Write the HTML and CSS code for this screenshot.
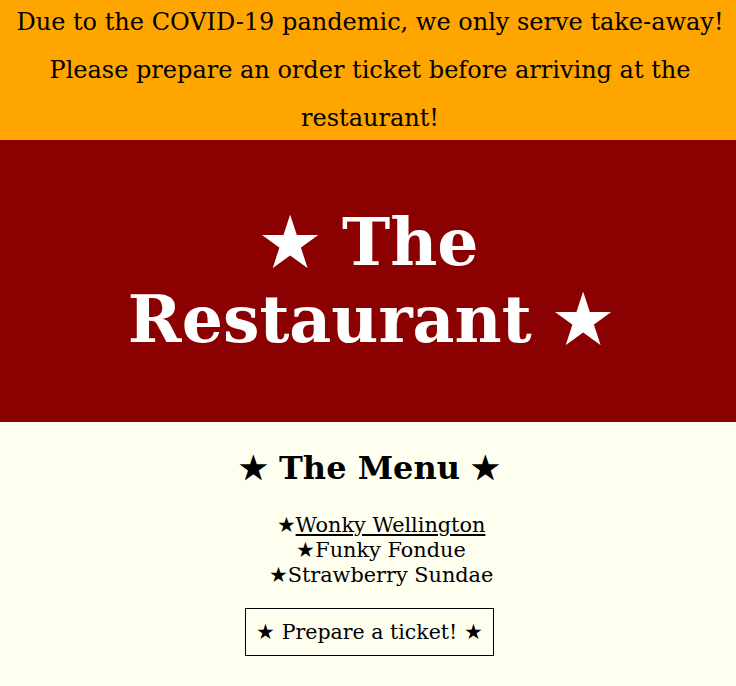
FILE: index.html
```html
<!DOCTYPE html>
<html>
<head>
<meta charset="utf-8">
<title>The Restaurant</title>
<link rel="stylesheet" href="styles.css">
</head>
<body>
<div class="notice">
  <p>Due to the COVID-19 pandemic, we only serve take-away! Please prepare an order ticket before arriving at the restaurant!</p>
</div>
<header class="hero">
  <h1>★ The Restaurant ★</h1>
</header>
<main class="menu">
  <h2>★ The Menu ★</h2>
  <ul class="dishes">
    <li><span class="star">★</span><a href="#">Wonky Wellington</a></li>
    <li><span class="star">★</span>Funky Fondue</li>
    <li><span class="star">★</span>Strawberry Sundae</li>
  </ul>
  <div class="actions"><span class="ticket">★ Prepare a ticket! ★</span></div>
</main>
</body>
</html>
```

FILE: styles.css
```css
html, body {
  margin: 0;
  padding: 0;
}
body {
  font-family: "DejaVu Serif", serif;
  background: #fffff0;
  color: #000;
}
.notice {
  background: #ffa500;
  height: 140px;
  display: flex;
  align-items: center;
  justify-content: center;
  overflow: hidden;
  padding-left: 4px;
}
.notice p {
  margin: 0;
  padding: 0 8px;
  font-size: 24px;
  line-height: 48px;
  text-align: center;
}
.hero {
  background: #8b0000;
  height: 282px;
  display: flex;
  align-items: center;
  justify-content: center;
  padding-left: 4px;
}
.hero h1 {
  margin: 0;
  max-width: 560px;
  color: #fff;
  font-size: 64.8px;
  line-height: 77px;
  text-align: center;
}
.menu {
  text-align: center;
  height: 264px;
  overflow: hidden;
  padding-left: 3px;
}
.menu h2 {
  font-size: 32px;
  margin: 26.56px 0;
}
.dishes {
  list-style: none;
  margin: 20px 0;
  padding: 0 0 0 23px;
  font-size: 20.8px;
  line-height: 25px;
}
.dishes a {
  color: #000;
  text-decoration: underline;
}
.ticket {
  display: inline-block;
  border: 1px solid #000;
  padding: 11px 10px;
  font-size: 20.5px;
  line-height: 24px;
}
```
